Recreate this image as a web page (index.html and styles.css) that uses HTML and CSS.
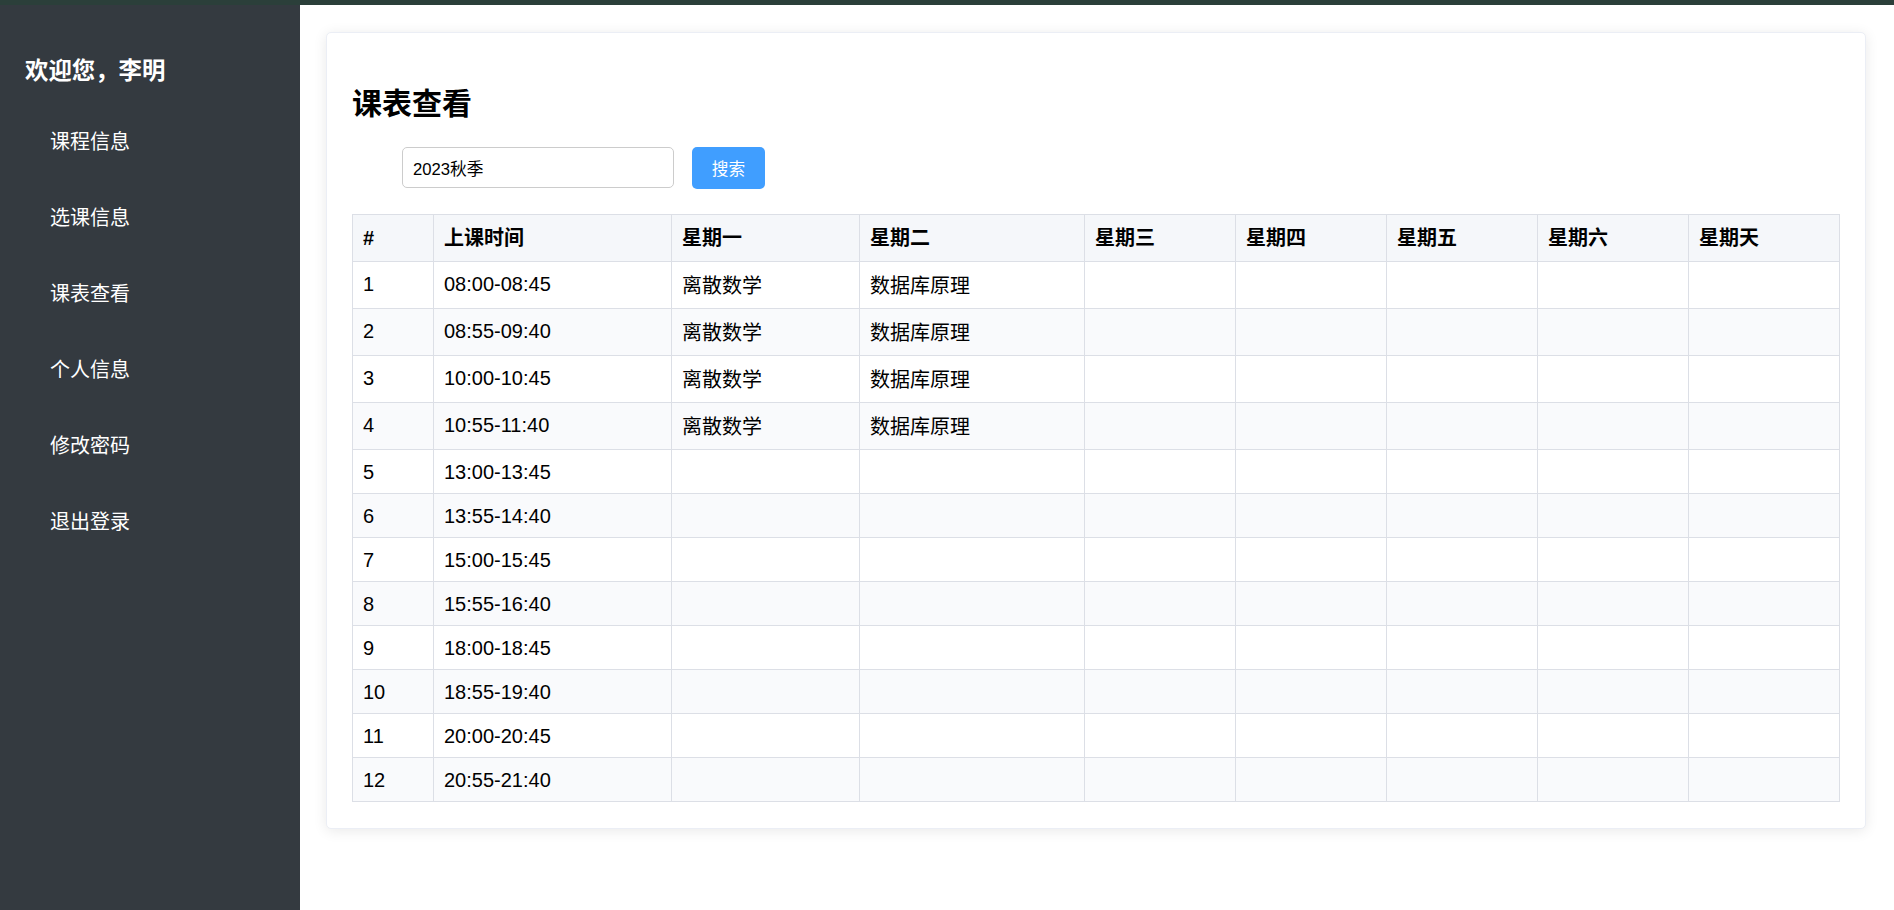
FILE: index.html
```html
<!DOCTYPE html>
<html lang="zh-CN">
<head>
<meta charset="utf-8">
<title>课表查看</title>
<link rel="stylesheet" href="styles.css">
</head>
<body>
<div class="topbar"></div>
<div class="layout">
  <aside class="sidebar">
    <h3 class="welcome">欢迎您，李明</h3>
    <ul class="nav">
      <li><a href="#">课程信息</a></li>
      <li><a href="#">选课信息</a></li>
      <li><a href="#">课表查看</a></li>
      <li><a href="#">个人信息</a></li>
      <li><a href="#">修改密码</a></li>
      <li><a href="#">退出登录</a></li>
    </ul>
  </aside>
  <main class="main">
    <section class="card">
      <h2 class="title">课表查看</h2>
      <div class="search">
        <input class="search-input" type="text" value="2023秋季">
        <button class="search-btn" type="button">搜索</button>
      </div>
      <table class="timetable">
        <colgroup>
          <col class="c-no"><col class="c-time"><col class="c-mon"><col class="c-tue">
          <col class="c-day"><col class="c-day"><col class="c-day"><col class="c-day"><col class="c-day">
        </colgroup>
        <thead>
          <tr><th>#</th><th>上课时间</th><th>星期一</th><th>星期二</th><th>星期三</th><th>星期四</th><th>星期五</th><th>星期六</th><th>星期天</th></tr>
        </thead>
        <tbody>
          <tr><td>1</td><td>08:00-08:45</td><td><span class="course">离散数学</span></td><td><span class="course">数据库原理</span></td><td></td><td></td><td></td><td></td><td></td></tr>
          <tr><td>2</td><td>08:55-09:40</td><td><span class="course">离散数学</span></td><td><span class="course">数据库原理</span></td><td></td><td></td><td></td><td></td><td></td></tr>
          <tr><td>3</td><td>10:00-10:45</td><td><span class="course">离散数学</span></td><td><span class="course">数据库原理</span></td><td></td><td></td><td></td><td></td><td></td></tr>
          <tr><td>4</td><td>10:55-11:40</td><td><span class="course">离散数学</span></td><td><span class="course">数据库原理</span></td><td></td><td></td><td></td><td></td><td></td></tr>
          <tr><td>5</td><td>13:00-13:45</td><td></td><td></td><td></td><td></td><td></td><td></td><td></td></tr>
          <tr><td>6</td><td>13:55-14:40</td><td></td><td></td><td></td><td></td><td></td><td></td><td></td></tr>
          <tr><td>7</td><td>15:00-15:45</td><td></td><td></td><td></td><td></td><td></td><td></td><td></td></tr>
          <tr><td>8</td><td>15:55-16:40</td><td></td><td></td><td></td><td></td><td></td><td></td><td></td></tr>
          <tr><td>9</td><td>18:00-18:45</td><td></td><td></td><td></td><td></td><td></td><td></td><td></td></tr>
          <tr><td>10</td><td>18:55-19:40</td><td></td><td></td><td></td><td></td><td></td><td></td><td></td></tr>
          <tr><td>11</td><td>20:00-20:45</td><td></td><td></td><td></td><td></td><td></td><td></td><td></td></tr>
          <tr><td>12</td><td>20:55-21:40</td><td></td><td></td><td></td><td></td><td></td><td></td><td></td></tr>
        </tbody>
      </table>
    </section>
  </main>
</div>
</body>
</html>
```

FILE: styles.css
```css
* { box-sizing: border-box; }

html, body {
  margin: 0;
  padding: 0;
  height: 100%;
}

body {
  font-family: "Liberation Sans", "Noto Sans CJK SC", sans-serif;
  font-size: 20px;
  color: #000;
  background: #fff;
  display: flex;
  flex-direction: column;
}

.topbar {
  height: 5px;
  flex: 0 0 5px;
  background: #2b3f3a;
}

.layout {
  flex: 1;
  display: flex;
  min-height: 0;
}

.sidebar {
  width: 300px;
  flex: 0 0 300px;
  background: #343a40;
  color: #fff;
  padding: 51px 0 0 25px;
}

.welcome {
  margin: 0;
  font-size: 23.4px;
  line-height: 30px;
  font-weight: bold;
}

.nav {
  list-style: none;
  margin: 18px 0 0 0;
  padding: 0;
}

.nav a {
  display: block;
  padding: 25px 0 25px 25px;
  line-height: 26px;
  color: #fff;
  text-decoration: none;
  font-size: 20px;
}

.main {
  flex: 1;
  padding: 27px 29px 0 26px;
}

.card {
  background: #fff;
  border: 1px solid #ebeef5;
  border-radius: 5px;
  box-shadow: 0 2px 14px rgba(0, 0, 0, 0.09);
  padding: 25px 25px 26px 25px;
}

.title {
  margin: 28px 0 0 0;
  font-size: 30px;
  line-height: 36px;
  font-weight: bold;
}

.search {
  display: flex;
  align-items: flex-start;
  margin: 25px 0 0 0;
  padding-left: 50px;
}

.search-input {
  width: 272px;
  height: 41px;
  border: 1px solid #cccccc;
  border-radius: 5px;
  padding: 0 10px;
  font-family: "Liberation Sans", "Noto Sans CJK SC", sans-serif;
  font-size: 16.7px;
  color: #000;
  outline: none;
}

.search-btn {
  margin-left: 18px;
  width: 73px;
  height: 42px;
  border: none;
  border-radius: 5px;
  background: #409eff;
  color: #fff;
  font-family: "Liberation Sans", "Noto Sans CJK SC", sans-serif;
  font-size: 16.7px;
}

.timetable {
  width: 100%;
  margin-top: 25px;
  border-collapse: collapse;
  table-layout: fixed;
}

.c-no { width: 81px; }
.c-time { width: 238px; }
.c-mon { width: 188px; }
.c-tue { width: 225px; }
.c-day { width: 151px; }

.timetable th,
.timetable td {
  border: 1px solid #dcdfe6;
  padding: 11px 10px 9px 10px;
  text-align: left;
  vertical-align: top;
  font-size: 20px;
}

.timetable td {
  line-height: 23px;
}

.timetable th {
  padding: 10px;
  line-height: 26px;
  font-weight: bold;
  background: #f5f7fa;
}

.timetable tbody tr:nth-child(even) td {
  background: #f9fafc;
}

.course {
  line-height: 26px;
}
```
